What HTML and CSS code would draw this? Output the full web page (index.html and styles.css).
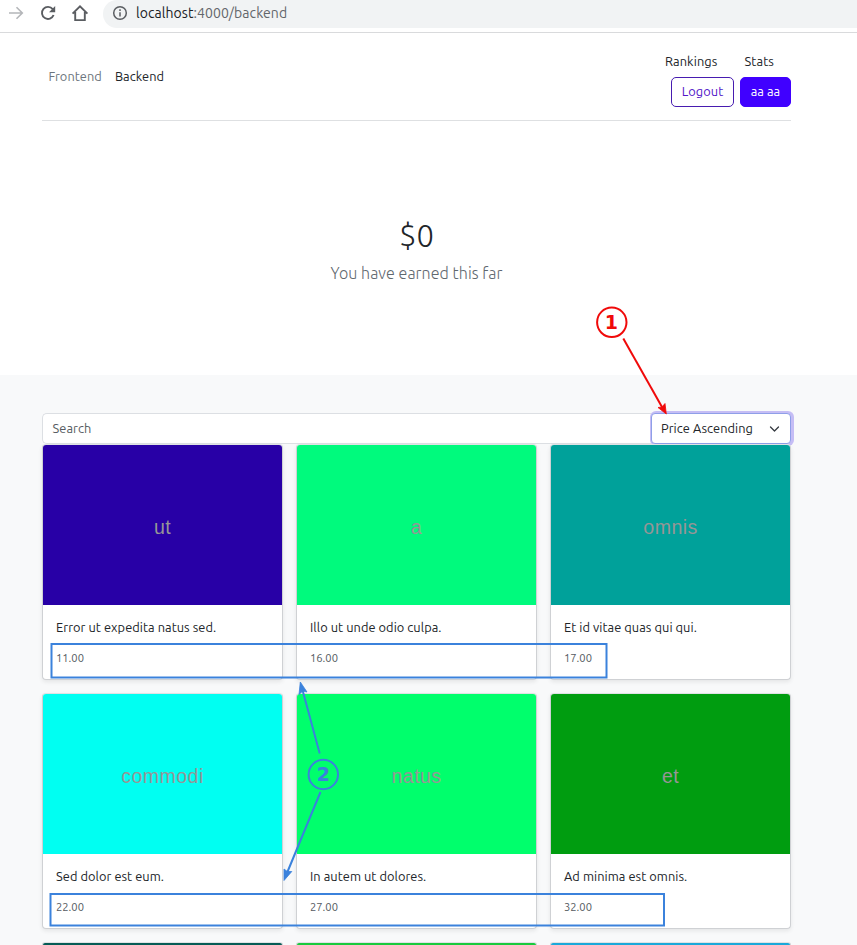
FILE: index.html
```html
<!DOCTYPE html>
<html lang="en">
<head>
<meta charset="utf-8">
<title>Backend</title>
<link rel="stylesheet" href="styles.css">
</head>
<body>
<div class="browser">
  <svg class="tools" width="100" height="32" viewBox="0 0 100 32" fill="none">
    <path d="M9 13H22M16.5 7.2L22.3 13L16.5 18.8" stroke="#b4b6b9" stroke-width="1.6"/>
    <path d="M52.7 9.2A6 6 0 1 0 53.6 15" stroke="#5a5d61" stroke-width="1.9"/>
    <path d="M55.2 6V12.2H49Z" fill="#5a5d61"/>
    <path d="M72.6 13.6L80 6.3L87.4 13.6M75.2 12V20.1H84.8V12" stroke="#5a5d61" stroke-width="1.9"/>
  </svg>
  <div class="address">
    <svg width="16" height="16" viewBox="0 0 16 16" fill="none" stroke="#5a5d61" stroke-width="1.5">
      <circle cx="8" cy="8" r="6.3"/><path d="M8 7.2V11.6M8 4.3V5.9"/>
    </svg>
    <span class="url"><b>localhost</b>:4000/backend</span>
  </div>
</div>
<header class="header">
  <nav class="nav"><a class="muted">Frontend</a><a>Backend</a></nav>
  <div class="account">
    <div class="links"><a>Rankings</a><a>Stats</a></div>
    <div class="buttons"><button class="btn outline">Logout</button><button class="btn solid">aa aa</button></div>
  </div>
</header>
<section class="hero">
  <h1>$0</h1>
  <p>You have earned this far</p>
</section>
<main class="album">
  <div class="container">
    <div class="filters">
      <div class="search">Search</div>
      <div class="select"><span>Price Ascending</span>
        <svg width="11" height="8" viewBox="0 0 11 8" fill="none" stroke="#343a40" stroke-width="1.3" stroke-linecap="round" stroke-linejoin="round"><path d="M1.5 2L5.5 6L9.5 2"/></svg>
      </div>
    </div>
    <div class="grid">
      <article class="card"><div class="pic indigo">ut</div><div class="body"><h2>Error ut expedita natus sed.</h2><small>11.00</small></div></article>
      <article class="card"><div class="pic mint">a</div><div class="body"><h2>Illo ut unde odio culpa.</h2><small>16.00</small></div></article>
      <article class="card"><div class="pic teal">omnis</div><div class="body"><h2>Et id vitae quas qui qui.</h2><small>17.00</small></div></article>
      <article class="card"><div class="pic cyan">commodi</div><div class="body"><h2>Sed dolor est eum.</h2><small>22.00</small></div></article>
      <article class="card"><div class="pic spring">natus</div><div class="body"><h2>In autem ut dolores.</h2><small>27.00</small></div></article>
      <article class="card"><div class="pic green">et</div><div class="body"><h2>Ad minima est omnis.</h2><small>32.00</small></div></article>
      <article class="card cut"><div class="pic pine"></div></article>
      <article class="card cut"><div class="pic lime"></div></article>
      <article class="card cut"><div class="pic sky"></div></article>
    </div>
  </div>
</main>
<svg class="notes" width="857" height="945" viewBox="0 0 857 945" fill="none">
  <g stroke="#3b82dc" stroke-width="2">
    <rect x="51.5" y="644" width="555" height="33.5"/>
    <rect x="50.5" y="894" width="613.5" height="31.5"/>
    <path d="M319.7 753.5L302.5 690M320.5 792L287 873"/>
    <circle cx="323.3" cy="774.5" r="14.7"/>
  </g>
  <path d="M300.3 682L307 692L302.8 691L299 694.5Z" fill="#3b82dc" stroke="#3b82dc" stroke-width=".8"/>
  <path d="M284 880.500L284 869L287.3 871.5L291.8 871.5Z" fill="#3b82dc" stroke="#3b82dc" stroke-width=".8"/>
  <g stroke="#f00a0a" stroke-width="2">
    <path d="M623.3 338.5L662 407"/>
    <circle cx="611.8" cy="322.3" r="14.7"/>
  </g>
  <path d="M666.3 414L658 407.500L662 407L665 403.500Z" fill="#f00a0a" stroke="#f00a0a" stroke-width=".8"/>
  <text x="611.3" y="329" fill="#f00a0a">1</text>
  <text x="323.3" y="781.2" fill="#3b82dc">2</text>
</svg>
</body>
</html>
```
FILE: styles.css
```css
* { box-sizing: border-box; }
body {
  margin: 0;
  background: #fff;
  color: #212529;
  font: 12.8px/19.2px "Ubuntu", "Noto Sans", sans-serif;
  letter-spacing: 0.06px;
}
.browser {
  display: flex;
  height: 33px;
  border-bottom: 1px solid #d9dadc;
}
.tools { flex: none; }
.address {
  display: flex;
  align-items: center;
  gap: 8px;
  flex: 1;
  height: 28px;
  margin-left: 3px;
  padding: 0 0 2px 9px;
  border-radius: 14px 0 0 14px;
  background: #f1f3f4;
}
.url { padding-top: 1px; font-size: 14px; color: #62666a; }
.url b { font-weight: 400; color: #202124; }
.header {
  display: flex;
  justify-content: space-between;
  align-items: center;
  width: 749px;
  height: 88px;
  margin-left: 42px;
  border-bottom: 1px solid #dee0e2;
}
.nav { display: flex; gap: 13px; padding-left: 6.4px; }
.muted { color: #6c757d; }
.account { display: flex; flex-direction: column; align-items: flex-end; padding-top: 6px; }
.links { display: flex; gap: 27px; padding-right: 17px; margin-bottom: 5px; letter-spacing: 0.12px; }
.buttons { display: flex; gap: 6px; }
.btn {
  height: 30px;
  padding: 0;
  border: 1px solid #4000ff;
  border-radius: 5px;
  font: inherit;
  letter-spacing: inherit;
}
.outline { width: 63px; background: #fff; border-color: #471cb0; color: #5216c8; }
.solid { width: 51px; background: #4000ff; color: #fff; }
.hero { height: 254px; padding-top: 96px; text-align: center; width: 833px; }
.hero h1 { margin: 0; font-weight: 300; font-size: 31px; line-height: 38px; }
.hero p {
  margin: 6px 0 0;
  font-weight: 300;
  font-size: 16px;
  line-height: 24px;
  color: #5f686f;
}
.album { height: 570px; padding: 38px 0 0 42px; background: #f8f9fa; }
.container { width: 749px; }
.filters { display: flex; height: 31px; }
.search {
  flex: 1;
  padding: 5px 9.6px;
  border: 1px solid #dcdfe3;
  border-right: 0;
  border-radius: 5px 0 0 5px;
  background: #fff;
  color: #565c62;
}
.select {
  display: flex;
  align-items: center;
  justify-content: space-between;
  width: 140px;
  padding: 0 10px 0 9px;
  border: 1px solid #8f9fe8;
  border-radius: 4px;
  background: #fff;
  box-shadow: 1px 0 0 2px #c5bdf5;
}
.grid {
  position: relative;
  display: grid;
  grid-template-columns: repeat(3, 241px);
  gap: 13px;
}
.card {
  height: 236px;
  overflow: hidden;
  border: 1px solid #cfd1d4;
  border-top-color: #dfe2e4;
  border-radius: 4px;
  background: #fff;
  box-shadow: 0 2px 4px rgba(0, 0, 0, .08);
}
.cut { height: 3px; border-bottom: 0; border-radius: 4px 4px 0 0; box-shadow: none; }
.pic {
  display: flex;
  align-items: center;
  justify-content: center;
  height: 160px;
  padding-top: 4px;
  color: #969696;
  font: 19.6px "Liberation Sans", sans-serif;
  letter-spacing: 0.4px;
}
.indigo { background: #2800a6; }
.mint { background: #00fa7d; }
.teal { background: #00a19a; }
.cyan { background: #00fff2; }
.spring { background: #00ff6c; }
.green { background: #009d10; }
.pine { background: #065b55; }
.lime { background: #18ca3d; }
.sky { background: #1aa9da; }
.body { padding: 13px; }
.body h2 { margin: 0 0 12px; font-size: 12.8px; line-height: 19px; font-weight: 400; white-space: nowrap; }
.body small { display: block; font-size: 11.2px; line-height: 18px; letter-spacing: 0; color: #555b61; }
.notes { position: absolute; left: 0; top: 0; }
.notes text { font: bold 19px "DejaVu Sans", sans-serif; text-anchor: middle; }
```
